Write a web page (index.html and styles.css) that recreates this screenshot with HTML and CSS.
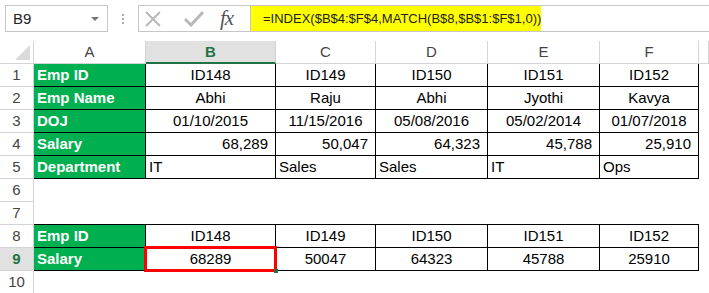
FILE: index.html
```html
<!DOCTYPE html>
<html>
<head>
    <title>INDEX MATCH</title>
    <link rel="stylesheet" href="styles.css">
</head>
<body>
    <div class="topbar">
        <div class="namebox">
            <span>B9</span>
            <span class="arrow"></span>
        </div>
        <div class="dots">
            <span></span><span></span><span></span>
        </div>
        <div class="fxtools">
            <svg class="tool" width="18" height="16" viewBox="0 0 18 16">
                <path d="M2 1 L16 15 M16 1 L2 15" stroke="#b8b8b8" stroke-width="2" fill="none"/>
            </svg>
            <svg class="tool" width="20" height="16" viewBox="0 0 20 16">
                <path d="M1 8 L7 14 L19 1" stroke="#b8b8b8" stroke-width="3" fill="none"/>
            </svg>
            <span class="fx">fx</span>
        </div>
        <div class="formula">
            <span class="hl">=INDEX($B$4:$F$4,MATCH(B$8,$B$1:$F$1,0))</span>
        </div>
    </div>

    <div class="sheet">
        <!-- column headers -->
        <div class="hd corner"><span class="tri"></span></div>
        <div class="hd">A</div>
        <div class="hd sel">B</div>
        <div class="hd">C</div>
        <div class="hd">D</div>
        <div class="hd">E</div>
        <div class="hd">F</div>
        <div class="hd"></div>

        <!-- row 1 -->
        <div class="rh">1</div>
        <div class="g">Emp ID</div>
        <div class="c mid">ID148</div>
        <div class="c mid">ID149</div>
        <div class="c mid">ID150</div>
        <div class="c mid">ID151</div>
        <div class="c mid">ID152</div>
        <div></div>

        <!-- row 2 -->
        <div class="rh">2</div>
        <div class="g">Emp Name</div>
        <div class="c mid">Abhi</div>
        <div class="c mid">Raju</div>
        <div class="c mid">Abhi</div>
        <div class="c mid">Jyothi</div>
        <div class="c mid">Kavya</div>
        <div></div>

        <!-- row 3 -->
        <div class="rh">3</div>
        <div class="g">DOJ</div>
        <div class="c mid">01/10/2015</div>
        <div class="c mid">11/15/2016</div>
        <div class="c mid">05/08/2016</div>
        <div class="c mid">05/02/2014</div>
        <div class="c mid">01/07/2018</div>
        <div></div>

        <!-- row 4 -->
        <div class="rh">4</div>
        <div class="g">Salary</div>
        <div class="c num">68,289</div>
        <div class="c num">50,047</div>
        <div class="c num">64,323</div>
        <div class="c num">45,788</div>
        <div class="c num">25,910</div>
        <div></div>

        <!-- row 5 -->
        <div class="rh">5</div>
        <div class="g">Department</div>
        <div class="c">IT</div>
        <div class="c">Sales</div>
        <div class="c">Sales</div>
        <div class="c">IT</div>
        <div class="c">Ops</div>
        <div></div>

        <!-- row 6 -->
        <div class="rh">6</div>
        <div></div><div></div><div></div><div></div><div></div><div></div><div></div>

        <!-- row 7 -->
        <div class="rh">7</div>
        <div class="bb"></div>
        <div class="bb"></div>
        <div class="bb"></div>
        <div class="bb"></div>
        <div class="bb"></div>
        <div class="bb"></div>
        <div></div>

        <!-- row 8 -->
        <div class="rh">8</div>
        <div class="g">Emp ID</div>
        <div class="c mid">ID148</div>
        <div class="c mid">ID149</div>
        <div class="c mid">ID150</div>
        <div class="c mid">ID151</div>
        <div class="c mid">ID152</div>
        <div></div>

        <!-- row 9 -->
        <div class="rh sel">9</div>
        <div class="g">Salary</div>
        <div class="c mid active">
            68289
            <span class="redbox"></span>
            <span class="handle"></span>
        </div>
        <div class="c mid">50047</div>
        <div class="c mid">64323</div>
        <div class="c mid">45788</div>
        <div class="c mid">25910</div>
        <div></div>

        <!-- row 10 -->
        <div class="rh">10</div>
        <div></div><div></div><div></div><div></div><div></div><div></div><div></div>
    </div>
</body>
</html>
```

FILE: styles.css
```css
* {
    box-sizing: border-box;
}
body {
    margin: 0;
    background: #fff;
    font-family: "Liberation Sans", Arial, sans-serif;
    color: #000;
    overflow: hidden;
}

/* formula bar */
.topbar {
    height: 41px;
    display: flex;
    align-items: flex-start;
    padding: 5px 0 0 5px;
}
.namebox {
    width: 103px;
    height: 27px;
    border: 1px solid #c6c6c6;
    display: flex;
    align-items: center;
    justify-content: space-between;
    padding: 0 8px 0 7px;
    font-size: 15px;
    color: #222;
}
.arrow {
    width: 0;
    height: 0;
    border-left: 4px solid transparent;
    border-right: 4px solid transparent;
    border-top: 4px solid #777;
}
.dots {
    width: 30px;
    height: 27px;
    display: flex;
    flex-direction: column;
    align-items: center;
    justify-content: center;
    gap: 2px;
}
.dots span {
    width: 2px;
    height: 2px;
    background: #aaa;
}
.fxtools {
    width: 113px;
    height: 27px;
    border: 1px solid #c6c6c6;
    display: flex;
    align-items: center;
    padding-left: 5px;
}
.tool {
    margin-right: 22px;
}
.tool + .tool {
    margin-right: 16px;
}
.fx {
    font-family: "Liberation Serif", serif;
    font-style: italic;
    font-size: 21px;
    color: #555;
    letter-spacing: -1px;
}
.formula {
    flex: 1;
    height: 27px;
    border: 1px solid #c6c6c6;
    border-left: none;
    border-right: none;
    display: flex;
}
.hl {
    background: #ffff00;
    padding: 0 0 0 12px;
    font-size: 13px;
    line-height: 25px;
    color: #222;
}

/* sheet grid */
.sheet {
    display: grid;
    grid-template-columns: 34px 112px 130px 100px 112px 112px 99px 10px;
    grid-auto-rows: 23px;
    font-size: 15px;
    line-height: 22px;
}
.hd {
    border-right: 1px solid #d4d4d4;
    border-bottom: 1px solid #d4d4d4;
    text-align: center;
    color: #444;
    line-height: 22px;
}
.hd.sel {
    background: #e1e1e1;
    color: #217346;
    font-weight: bold;
    border-bottom: 2px solid #217346;
    line-height: 21px;
}
.corner {
    position: relative;
}
.tri {
    position: absolute;
    right: 3px;
    bottom: 3px;
    width: 0;
    height: 0;
    border-left: 15px solid transparent;
    border-bottom: 15px solid #dadada;
}
.rh {
    border-right: 1px solid #d4d4d4;
    border-bottom: 1px solid #d4d4d4;
    text-align: center;
    color: #444;
}
.rh.sel {
    background: #e1e1e1;
    color: #217346;
    font-weight: bold;
}
.g {
    background: #00b050;
    color: #fff;
    font-weight: bold;
    padding-left: 3px;
    border-right: 1px solid #000;
    border-bottom: 1px solid #000;
    white-space: nowrap;
}
.c {
    border-right: 1px solid #000;
    border-bottom: 1px solid #000;
    padding: 0 3px;
    white-space: nowrap;
}
.mid {
    text-align: center;
}
.num {
    text-align: right;
    padding-right: 7px;
}
.bb {
    border-bottom: 1px solid #000;
}
.active {
    position: relative;
}
.redbox {
    position: absolute;
    left: -2px;
    top: -2px;
    right: -2px;
    bottom: -2px;
    border: 3px solid #ff0000;
}
.handle {
    position: absolute;
    right: -3px;
    bottom: -3px;
    width: 4px;
    height: 4px;
    background: #217346;
}
```
